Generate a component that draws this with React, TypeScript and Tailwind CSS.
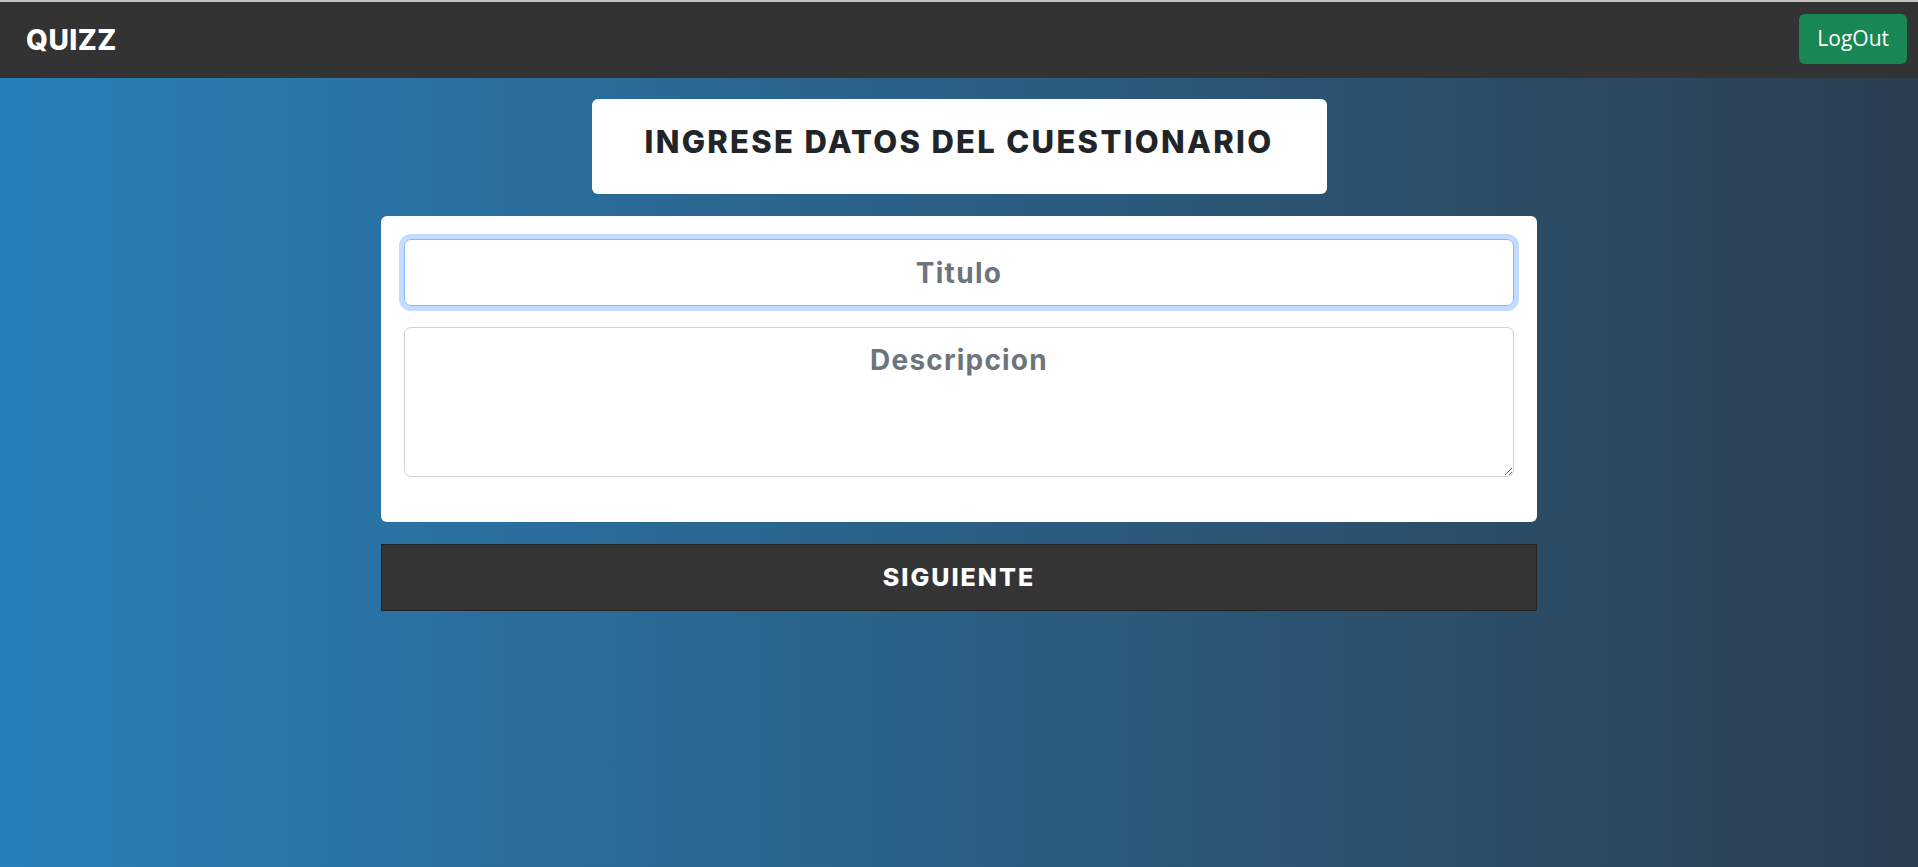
import { useState } from 'react';

const HEAD_FONT = "font-['Inter','DejaVu_Sans',sans-serif]";

export default function App() {
  const [titulo, setTitulo] = useState('');
  const [descripcion, setDescripcion] = useState('');

  return (
    <div className="min-h-screen flex flex-col bg-[#c4c4c4]">
      <div className="h-[2px] bg-[#c4c4c4]" />
      <nav className="h-[76px] bg-[#333333] flex items-center justify-between pl-[26px] pr-[11px]">
        <span className={`${HEAD_FONT} text-white font-extrabold text-[28px] tracking-[0.5px] leading-none`}>QUIZZ</span>
        <button className="h-[50px] px-[18px] rounded-[6px] bg-[#198754] text-white text-[21px] font-['Open_Sans',sans-serif] mt-[-2px]">
          LogOut
        </button>
      </nav>
      <main className="flex-1 bg-linear-to-r/srgb from-[#2980b9] to-[#2c3e50] flex flex-col items-center pt-[21px]">
        <div className="w-[735px] h-[95px] bg-white rounded-[6px] flex justify-center pt-[24px]">
          <h2 className={`${HEAD_FONT} font-extrabold text-[31px] leading-[37px] tracking-[2.3px] text-[#212529]`}>
            INGRESE DATOS DEL CUESTIONARIO
          </h2>
        </div>
        <div className="mt-[22px] w-[1156px] bg-white rounded-[6px] p-[23px] flex flex-col">
          <input
            type="text"
            autoFocus
            value={titulo}
            onChange={e => setTitulo(e.target.value)}
            placeholder="Titulo"
            className={`${HEAD_FONT} h-[67px] w-full border border-[#86b7fe] rounded-[7px] shadow-[0_0_0_5px_rgba(13,110,253,0.25)] text-center text-[28px] font-bold tracking-[1.3px] text-[#212529] placeholder:text-[#6c757d] outline-none`}
          />
          <textarea
            value={descripcion}
            onChange={e => setDescripcion(e.target.value)}
            placeholder="Descripcion"
            className={`${HEAD_FONT} mt-[21px] mb-[22px] h-[150px] w-full border border-[#ced4da] rounded-[7px] text-center text-[28px] font-bold tracking-[1.2px] text-[#212529] placeholder:text-[#6c757d] pt-[11px] outline-none`}
          />
        </div>
        <button className={`${HEAD_FONT} mt-[22px] w-[1156px] h-[67px] bg-[#343434] border border-[#232323] text-white font-extrabold text-[25px] tracking-[2px]`}>
          SIGUIENTE
        </button>
      </main>
    </div>
  );
}
